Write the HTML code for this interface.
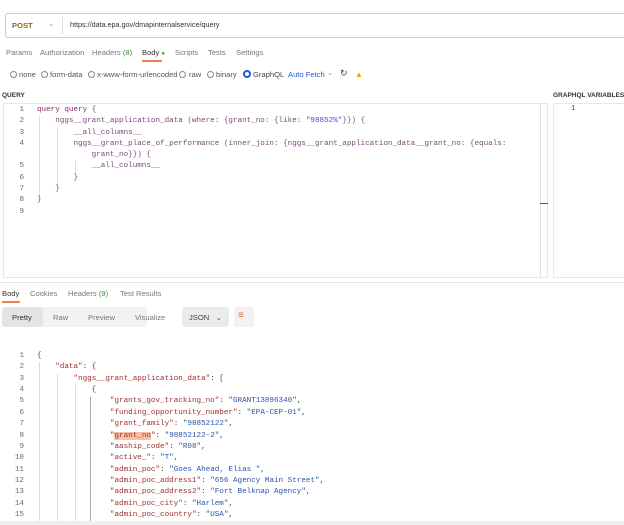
<!DOCTYPE html><html><head><style>
*{margin:0;padding:0;box-sizing:border-box}
body{width:624px;height:525px;background:#fff;position:relative;overflow:hidden;font-family:"Liberation Sans",sans-serif;font-size:7.6px;color:#555}
.a{position:absolute;white-space:pre}
.m{font-family:"Liberation Mono",monospace;font-size:7.6px}
.ln{position:absolute;width:14px;text-align:right;color:#5a6c7e;font-family:"Liberation Mono",monospace;font-size:7.6px;line-height:11.3px}
.k{color:#8a2a6a}.s{color:#4450d0}.j{color:#a03030}.v{color:#2a55a5}
.g{position:absolute;width:1px;background:#ddd}
.r{position:absolute;top:71px;width:7px;height:7px;border:1px solid #888;border-radius:50%}
</style></head><body>
<div class="a" style="left:5px;top:13px;width:625px;height:25px;border:1px solid #ccc;border-radius:3px"></div>
<div class="a" style="left:12px;top:21px;color:#8a6a1a;font-weight:bold;font-size:7.6px">POST</div>
<div class="a" style="left:48px;top:19px;color:#888">⌄</div>
<div class="a" style="left:62px;top:17px;width:1px;height:17px;background:#ddd"></div>
<div class="a" style="left:70px;top:20px;color:#333;font-size:7.2px">https://data.epa.gov/dmapinternalservice/query</div>
<div class="a" style="left:6px;top:48px;color:#777">Params</div>
<div class="a" style="left:40px;top:48px;color:#777">Authorization</div>
<div class="a" style="left:92px;top:48px;color:#777">Headers <span style="color:#3a8a3a">(8)</span></div>
<div class="a" style="left:142px;top:48px;color:#333">Body <span style="color:#2a2;font-size:6px">●</span></div>
<div class="a" style="left:142px;top:60px;width:20px;height:2px;background:#f08050"></div>
<div class="a" style="left:175px;top:48px;color:#777">Scripts</div>
<div class="a" style="left:208px;top:48px;color:#777">Tests</div>
<div class="a" style="left:236px;top:48px;color:#777">Settings</div>
<div class="r" style="left:10px"></div><div class="a" style="left:19px;top:70px">none</div>
<div class="r" style="left:41px"></div><div class="a" style="left:50px;top:70px">form-data</div>
<div class="r" style="left:88px"></div><div class="a" style="left:97px;top:70px">x-www-form-urlencoded</div>
<div class="r" style="left:179px"></div><div class="a" style="left:189px;top:70px">raw</div>
<div class="r" style="left:207px"></div><div class="a" style="left:216px;top:70px">binary</div>
<div class="a" style="left:243px;top:70px;width:8px;height:8px;border:2px solid #1a5ad8;border-radius:50%"></div>
<div class="a" style="left:253px;top:70px;color:#444">GraphQL</div>
<div class="a" style="left:288px;top:70px;color:#1a5ad8">Auto Fetch</div>
<div class="a" style="left:327px;top:68px;color:#888">⌄</div>
<div class="a" style="left:340px;top:68px;color:#444;font-size:9px">↻</div>
<div class="a" style="left:355px;top:70px;color:#e8a800;font-size:8px">▲</div>
<div class="a" style="left:2px;top:92px;font-size:6.5px;font-weight:bold;color:#333">QUERY</div>
<div class="a" style="left:553px;top:92px;font-size:6.5px;font-weight:bold;color:#333">GRAPHQL VARIABLES</div>
<div class="a" style="left:3px;top:103px;width:545px;height:175px;border:1px solid #e8e8e8"></div>
<div class="a" style="left:540px;top:103px;width:8px;height:175px;border-left:1px solid #e4e4e4"></div>
<div class="a" style="left:540px;top:203px;width:8px;height:1px;background:#555"></div>
<div class="a" style="left:553px;top:103px;width:80px;height:175px;border:1px solid #e8e8e8"></div>
<div class="a m" style="left:571px;top:105px;color:#3a4a6a">1</div>
<div class="g" style="left:39px;top:116px;height:80px"></div>
<div class="g" style="left:57px;top:127px;height:58px"></div>
<div class="g" style="left:75px;top:161px;height:12px"></div>
<div class="ln" style="left:10px;top:105px">1<br>2<br>3<br>4<br><br>5<br>6<br>7<br>8<br>9</div>
<div class="a m" style="left:37px;top:105px;line-height:11.3px;color:#7a4a7a"><span class="k">query query</span> {
    nggs__grant_application_data (where: {grant_no: {like: <span class="s">"98852%"</span>}}) {
        __all_columns__
        nggs__grant_place_of_performance (inner_join: {nggs__grant_application_data__grant_no: {equals:
            grant_no}}) {
            __all_columns__
        }
    }
}</div>
<div class="a" style="left:0;top:282px;width:624px;height:1px;background:#e8e8e8"></div>
<div class="a" style="left:2px;top:289px;color:#333">Body</div>
<div class="a" style="left:2px;top:301px;width:18px;height:2px;background:#f08050"></div>
<div class="a" style="left:30px;top:289px;color:#777">Cookies</div>
<div class="a" style="left:68px;top:289px;color:#777">Headers <span style="color:#3a8a3a">(9)</span></div>
<div class="a" style="left:120px;top:289px;color:#777">Test Results</div>
<div class="a" style="left:2px;top:307px;width:145px;height:20px;background:#f2f2f2;border-radius:3px"></div>
<div class="a" style="left:2px;top:307px;width:41px;height:20px;background:#e4e4e4;border-radius:3px"></div>
<div class="a" style="left:12px;top:313px;color:#333">Pretty</div>
<div class="a" style="left:53px;top:313px;color:#777">Raw</div>
<div class="a" style="left:88px;top:313px;color:#777">Preview</div>
<div class="a" style="left:135px;top:313px;color:#777">Visualize</div>
<div class="a" style="left:182px;top:307px;width:47px;height:20px;background:#ebebeb;border-radius:3px"></div>
<div class="a" style="left:189px;top:313px;color:#444">JSON&nbsp;&nbsp; ⌄</div>
<div class="a" style="left:234px;top:307px;width:20px;height:20px;background:#f2f2f2;border-radius:3px"></div>
<div class="a" style="left:238px;top:310px;color:#f06030;font-size:10px">≡</div>
<div class="g" style="left:39px;top:362px;height:160px"></div>
<div class="g" style="left:57px;top:374px;height:148px"></div>
<div class="g" style="left:75px;top:385px;height:137px"></div>
<div class="g" style="left:90px;top:397px;height:125px;background:#aaa"></div>
<div class="ln" style="left:10px;top:351px;line-height:11.36px">1<br>2<br>3<br>4<br>5<br>6<br>7<br>8<br>9<br>10<br>11<br>12<br>13<br>14<br>15</div>
<div class="a m" style="left:37px;top:351px;line-height:11.36px;color:#444">{
    <span class="j">"data"</span>: {
        <span class="j">"nggs__grant_application_data"</span>: [
            {
                <span class="j">"grants_gov_tracking_no"</span>: <span class="v">"GRANT13896340"</span>,
                <span class="j">"funding_opportunity_number"</span>: <span class="v">"EPA-CEP-01"</span>,
                <span class="j">"grant_family"</span>: <span class="v">"98852122"</span>,
                <span class="j">"<span style="background:#f7c2a8">grant_no</span>"</span>: <span class="v">"98852122-2"</span>,
                <span class="j">"aaship_code"</span>: <span class="v">"R08"</span>,
                <span class="j">"active_"</span>: <span class="v">"T"</span>,
                <span class="j">"admin_poc"</span>: <span class="v">"Goes Ahead, Elias "</span>,
                <span class="j">"admin_poc_address1"</span>: <span class="v">"656 Agency Main Street"</span>,
                <span class="j">"admin_poc_address2"</span>: <span class="v">"Fort Belknap Agency"</span>,
                <span class="j">"admin_poc_city"</span>: <span class="v">"Harlem"</span>,
                <span class="j">"admin_poc_country"</span>: <span class="v">"USA"</span>,</div>
<div class="a" style="left:0;top:521px;width:624px;height:4px;background:#eee"></div>
</body></html>
